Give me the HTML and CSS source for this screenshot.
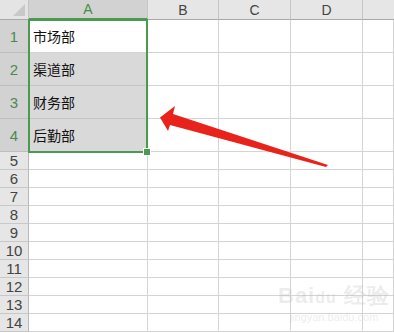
FILE: index.html
```html
<!DOCTYPE html>
<html>
<head>
<meta charset="utf-8">
<link rel="stylesheet" href="styles.css">
</head>
<body>
<div class="sheet">
  <div class="grid">
    <div class="corner"><span class="tri"></span></div>
    <div class="colh sel">A</div>
    <div class="colh">B</div>
    <div class="colh">C</div>
    <div class="colh">D</div>
    <div class="colh last"></div>

    <div class="rowh sel tall">1</div>
    <div class="cell a active tall">市场部</div>
    <div class="cell tall"></div><div class="cell tall"></div><div class="cell tall"></div><div class="cell tall"></div>

    <div class="rowh sel tall">2</div>
    <div class="cell a hl tall">渠道部</div>
    <div class="cell tall"></div><div class="cell tall"></div><div class="cell tall"></div><div class="cell tall"></div>

    <div class="rowh sel tall">3</div>
    <div class="cell a hl tall">财务部</div>
    <div class="cell tall"></div><div class="cell tall"></div><div class="cell tall"></div><div class="cell tall"></div>

    <div class="rowh sel tall">4</div>
    <div class="cell a hl tall">后勤部</div>
    <div class="cell tall"></div><div class="cell tall"></div><div class="cell tall"></div><div class="cell tall"></div>

    <div class="rowh">5</div><div class="cell"></div><div class="cell"></div><div class="cell"></div><div class="cell"></div><div class="cell"></div>
    <div class="rowh">6</div><div class="cell"></div><div class="cell"></div><div class="cell"></div><div class="cell"></div><div class="cell"></div>
    <div class="rowh">7</div><div class="cell"></div><div class="cell"></div><div class="cell"></div><div class="cell"></div><div class="cell"></div>
    <div class="rowh">8</div><div class="cell"></div><div class="cell"></div><div class="cell"></div><div class="cell"></div><div class="cell"></div>
    <div class="rowh">9</div><div class="cell"></div><div class="cell"></div><div class="cell"></div><div class="cell"></div><div class="cell"></div>
    <div class="rowh">10</div><div class="cell"></div><div class="cell"></div><div class="cell"></div><div class="cell"></div><div class="cell"></div>
    <div class="rowh">11</div><div class="cell"></div><div class="cell"></div><div class="cell"></div><div class="cell"></div><div class="cell"></div>
    <div class="rowh">12</div><div class="cell"></div><div class="cell"></div><div class="cell"></div><div class="cell"></div><div class="cell"></div>
    <div class="rowh">13</div><div class="cell"></div><div class="cell"></div><div class="cell"></div><div class="cell"></div><div class="cell"></div>
    <div class="rowh">14</div><div class="cell"></div><div class="cell"></div><div class="cell"></div><div class="cell"></div><div class="cell"></div>
  </div>

  <div class="selection"><span class="handle"></span></div>

  <svg class="arrow" width="394" height="333" viewBox="0 0 394 333">
    <polygon points="160,117.5 175,106 173,114 328,165 326,167 170,125 168,131" fill="#e8231b"/>
  </svg>

  <div class="watermark">
    <div class="wm1">Bai<span class="paw">du</span> 经验</div>
    <div class="wm2">jingyan.baidu.com</div>
  </div>
</div>
</body>
</html>
```
FILE: styles.css
```css
html, body {
  margin: 0;
  padding: 0;
  background: #ffffff;
}
.sheet {
  position: relative;
  width: 394px;
  height: 333px;
  overflow: hidden;
  font-family: "Liberation Sans", "Noto Sans", sans-serif;
}
.grid {
  display: grid;
  grid-template-columns: 29px 119px 71px 72px 72px 31px;
  grid-template-rows: 20px 33px 33px 33px 33px repeat(10, 18px);
}
.corner {
  position: relative;
  background: #e4e4e4;
  border-right: 1px solid #c4c4c4;
  border-bottom: 1px solid #a8a8a8;
  box-sizing: border-box;
}
.tri {
  position: absolute;
  right: 3px;
  bottom: 3px;
  width: 0;
  height: 0;
  border-left: 12px solid transparent;
  border-bottom: 12px solid #c8c8c8;
}
.colh {
  background: #e6e6e6;
  border-right: 1px solid #c6c6c6;
  border-bottom: 1px solid #a8a8a8;
  box-sizing: border-box;
  color: #444;
  font-size: 14px;
  display: flex;
  align-items: center;
  justify-content: center;
}
.colh.sel {
  background: #d2d2d2;
  color: #3f8f46;
  border-bottom: 2px solid #4b9a50;
}
.colh.last { border-right: none; }
.rowh {
  background: #e6e6e6;
  border-right: 1px solid #b8b8b8;
  border-bottom: 1px solid #c8c8c8;
  box-sizing: border-box;
  color: #444;
  font-size: 15px;
  display: flex;
  align-items: center;
  justify-content: center;
}
.rowh.sel {
  background: #d2d2d2;
  color: #4b8a4f;
  border-bottom: 1px solid #bdbdbd;
}
.cell {
  border-right: 1px solid #d4d4d4;
  border-bottom: 1px solid #d4d4d4;
  box-sizing: border-box;
}
.cell.a {
  font-family: "Noto Sans CJK SC", sans-serif;
  font-size: 14px;
  color: #111;
  display: flex;
  align-items: center;
  padding-left: 4px;
}
.cell.hl {
  background: #d9d9d9;
  border-bottom-color: #c4c4c4;
}
.cell.active { background: #ffffff; }
.selection {
  position: absolute;
  left: 28px;
  top: 19px;
  width: 120px;
  height: 134px;
  border: 2px solid #4a9a4f;
  box-sizing: border-box;
}
.handle {
  position: absolute;
  right: -5px;
  bottom: -5px;
  width: 6px;
  height: 6px;
  background: #4a9a4f;
  border: 1px solid #fff;
}
.arrow {
  position: absolute;
  left: 0;
  top: 0;
}
.watermark {
  position: absolute;
  left: 278px;
  top: 284px;
  color: rgba(180,180,180,0.25);
  text-align: center;
}
.wm1 {
  font-size: 22px;
  font-weight: bold;
  line-height: 24px;
  letter-spacing: 1px;
}
.paw { font-size: 16px; }
.wm2 {
  font-size: 11px;
  line-height: 14px;
}
```
